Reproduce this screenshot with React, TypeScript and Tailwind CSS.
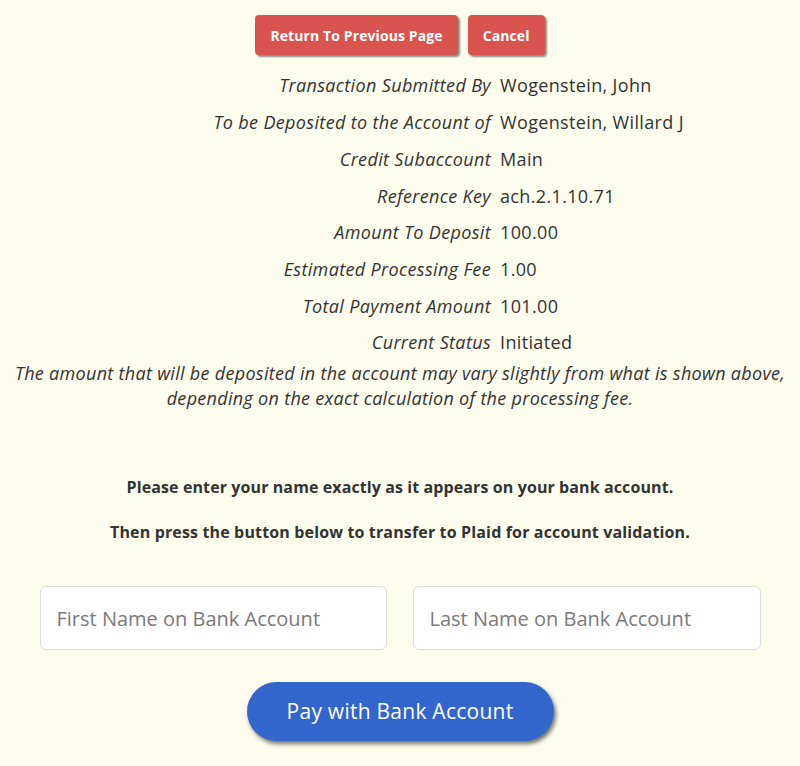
import React from "react";

const rows: [string, string][] = [
  ["Transaction Submitted By", "Wogenstein, John"],
  ["To be Deposited to the Account of", "Wogenstein, Willard J"],
  ["Credit Subaccount", "Main"],
  ["Reference Key", "ach.2.1.10.71"],
  ["Amount To Deposit", "100.00"],
  ["Estimated Processing Fee", "1.00"],
  ["Total Payment Amount", "101.00"],
  ["Current Status", "Initiated"],
];

export default function App() {
  return (
    <div
      className="min-h-[766px] w-[800px] bg-[#fdfded] text-[#333333] pt-[15px]"
      style={{ fontFamily: '"Open Sans", "Noto Sans", sans-serif' }}
    >
      <div className="flex justify-center gap-[10px]">
        <button className="h-[40px] px-[15px] rounded-[4px] bg-[#d9534f] text-white font-bold text-[14px] tracking-[0.1px] shadow-[2px_2px_2px_rgba(0,0,0,0.45)]">
          Return To Previous Page
        </button>
        <button className="h-[40px] px-[15px] rounded-[4px] bg-[#d9534f] text-white font-bold text-[14px] tracking-[0.1px] shadow-[2px_2px_2px_rgba(0,0,0,0.45)]">
          Cancel
        </button>
      </div>
      <div className="mt-[12.6px] flex flex-col">
        {rows.map(([l, v]) => (
          <div key={l} className="flex h-[36.7px] items-center text-[18px] tracking-[0.35px]">
            <div className="w-[500px] shrink-0 text-right italic pr-[9px]">{l}</div>
            <div>{v}</div>
          </div>
        ))}
      </div>
      <div className="text-center italic text-[18px] tracking-[0.3px] leading-[25px]">
        The amount that will be deposited in the account may vary slightly from what is shown above,
        <br />
        depending on the exact calculation of the processing fee.
      </div>
      <div className="mt-[64px] text-center font-bold text-[16px] tracking-[0.1px] leading-[24px]">
        Please enter your name exactly as it appears on your bank account.
      </div>
      <div className="mt-[21px] text-center font-bold text-[16px] tracking-[0.15px] leading-[24px]">
        Then press the button below to transfer to Plaid for account validation.
      </div>
      <div className="mt-[42px] flex justify-center gap-[26px]">
        <input
          className="w-[347px] h-[64px] rounded-[6px] border border-[#dddddd] bg-white px-[16px] text-[20px] placeholder:text-[#7a7a7a] outline-none"
          placeholder="First Name on Bank Account"
        />
        <input
          className="w-[348px] h-[64px] rounded-[6px] border border-[#dddddd] bg-white px-[16px] text-[20px] placeholder:text-[#7a7a7a] outline-none"
          placeholder="Last Name on Bank Account"
        />
      </div>
      <div className="mt-[32px] flex justify-center">
        <button className="w-[307px] h-[59px] rounded-full bg-[#3366cc] text-white text-[21px] tracking-[0.25px] shadow-[2px_3px_4px_rgba(0,0,0,0.55)]">
          Pay with Bank Account
        </button>
      </div>
    </div>
  );
}
